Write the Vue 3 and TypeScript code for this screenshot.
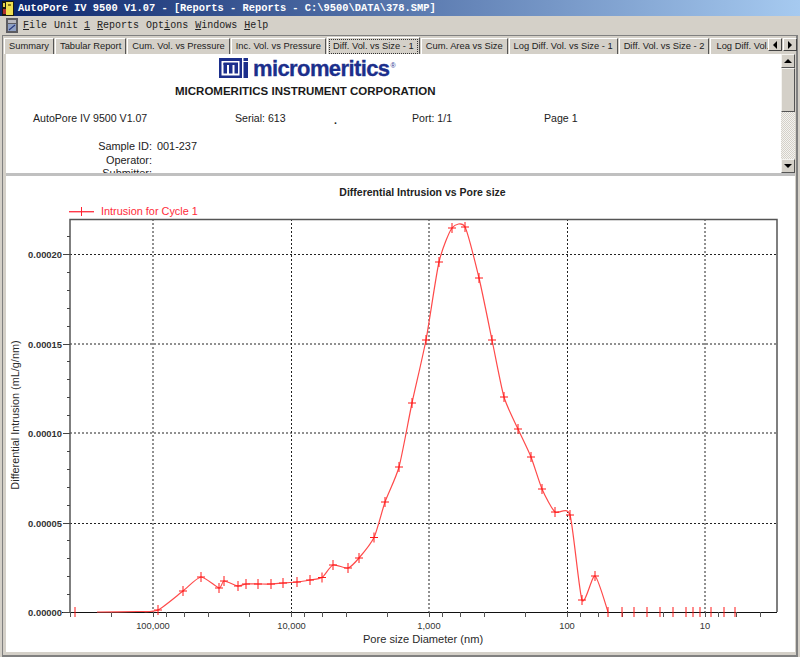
<template>
  <div class="window">
    <div class="titlebar">
      <svg class="app-icon" width="12" height="15" viewBox="0 0 12 15">
        <rect width="12" height="15" fill="#1c1c10" />
        <rect x="4" y="1" width="7" height="13" fill="#f0e050" />
        <rect x="1" y="2" width="2" height="4" fill="#e8d44a" />
        <rect x="1" y="8" width="3" height="5" fill="#b03030" />
        <rect x="6" y="3" width="3" height="2" fill="#8a7a20" />
      </svg>
      <span class="title-text">AutoPore IV 9500 V1.07 - [Reports - Reports - C:\9500\DATA\378.SMP]</span>
    </div>

    <div class="menubar">
      <svg class="doc-icon" width="12" height="15" viewBox="0 0 12 15">
        <rect width="12" height="15" fill="#5c5c62" />
        <rect x="2" y="2" width="8" height="3" fill="#b8b8c0" />
        <rect x="2" y="6" width="8" height="7" fill="#8fa0c4" />
        <path d="M3 12 L9 7" stroke="#2a3a80" stroke-width="1.2" />
      </svg>
      <span class="menu-item"><u>F</u>ile</span>
      <span class="menu-item">Unit <u>1</u></span>
      <span class="menu-item"><u>R</u>eports</span>
      <span class="menu-item">Opt<u>i</u>ons</span>
      <span class="menu-item"><u>W</u>indows</span>
      <span class="menu-item"><u>H</u>elp</span>
    </div>

    <div class="body">
      <div class="tabs">
        <div
          v-for="tab in tabs"
          :key="tab"
          class="tab"
          :class="{ active: tab === activeTab }"
        >
          <span class="tab-label">{{ tab }}</span>
        </div>
        <div class="tab clipped"><span class="tab-label">Log Diff. Vol. vs Size - 2</span></div>
        <div class="tab-arrows">
          <button class="arrow"><span class="tri-left"></span></button>
          <button class="arrow"><span class="tri-right"></span></button>
        </div>
      </div>

      <div class="report">
        <div class="report-page">
          <div class="logo">
            <svg width="29" height="20" viewBox="0 0 29 20">
              <path
                fill="#1c2f8c"
                fill-rule="evenodd"
                d="M0 0H23V20H0Z M2.5 3V17.5H20.5V3Z"
              />
              <rect x="24.5" y="0" width="4.5" height="3" fill="#1c2f8c" />
              <rect x="24.5" y="4" width="4.5" height="16" fill="#1c2f8c" />
              <rect x="4.5" y="5" width="3.5" height="10.5" fill="#1c2f8c" />
              <rect x="10" y="5" width="3.5" height="10.5" fill="#1c2f8c" />
              <rect x="15.5" y="5" width="3.5" height="10.5" fill="#1c2f8c" />
              <rect x="4.5" y="4.5" width="14.5" height="2.5" fill="#1c2f8c" />
            </svg>
            <span class="logo-word">micromeritics</span><span class="logo-reg">®</span>
          </div>
          <div class="company">MICROMERITICS INSTRUMENT CORPORATION</div>
          <div class="info-row">
            <span class="c-version">AutoPore IV 9500 V1.07</span>
            <span class="c-serial">Serial: 613</span>
            <span class="c-dot">.</span>
            <span class="c-port">Port: 1/1</span>
            <span>Page 1</span>
          </div>
          <div class="meta">
            <span class="meta-key">Sample ID:</span><span>001-237</span>
            <span class="meta-key">Operator:</span><span></span>
            <span class="meta-key">Submitter:</span><span></span>
          </div>
        </div>
        <div class="scrollbar">
          <button class="sb-btn"><span class="tri-up"></span></button>
          <div class="sb-thumb"></div>
          <div class="sb-track"></div>
          <button class="sb-btn"><span class="tri-down"></span></button>
        </div>
      </div>

      <div class="divider"></div>

      <svg class="chart" width="789" height="476" viewBox="6 176 789 476">
        <text x="422.5" y="196" class="t-title" text-anchor="middle">Differential Intrusion vs Pore size</text>

        <rect x="69" y="211" width="25" height="1.4" fill="#ff3a4a" />
        <rect x="81" y="207" width="1" height="9" fill="#ff2030" />
        <text x="101" y="215" class="t-legend">Intrusion for Cycle 1</text>

        <line
          v-for="x in gridX"
          :key="'gx' + x"
          :x1="x" y1="219" :x2="x" y2="612"
          class="grid"
        />
        <line
          v-for="y in gridY"
          :key="'gy' + y"
          x1="70" :y1="y" x2="777" :y2="y"
          class="grid"
        />

        <path d="M70 612V219.5H777V612" fill="none" stroke="#555" stroke-width="1.5" />
        <line x1="62" y1="612.5" x2="777" y2="612.5" stroke="#111" />

        <line
          v-for="t in yTicks"
          :key="'yt' + t.y"
          :x1="t.major ? 63 : 67" :y1="t.y" x2="70" :y2="t.y"
          stroke="#444"
        />
        <line
          v-for="x in xTicks"
          :key="'xt' + x"
          :x1="x" y1="612" :x2="x" y2="617"
          stroke="#555"
        />

        <text
          v-for="l in yLabels"
          :key="l.text"
          x="62" :y="l.y"
          class="t-ylabel"
          text-anchor="end"
        >{{ l.text }}</text>
        <text
          v-for="l in xLabels"
          :key="l.text"
          :x="l.x" y="629"
          class="t-xlabel"
          text-anchor="middle"
        >{{ l.text }}</text>

        <text x="423" y="643" class="t-axis" text-anchor="middle">Pore size Diameter (nm)</text>
        <text
          class="t-axis t-axis-y"
          text-anchor="middle"
          transform="translate(19 415) rotate(-90)"
        >Differential Intrusion (mL/g/nm)</text>

        <path :d="curvePath" fill="none" stroke="#ff4a4a" stroke-width="1.2" stroke-linejoin="round" />
        <g stroke="#ff1818">
          <template v-for="p in markers" :key="p[0]">
            <line :x1="p[0] - 4" :y1="p[1]" :x2="p[0] + 4" :y2="p[1]" />
            <line :x1="p[0]" :y1="p[1] - 5" :x2="p[0]" :y2="p[1] + 5" />
          </template>
        </g>
        <line
          v-for="x in zeroMarks"
          :key="'z' + x"
          :x1="x" y1="607" :x2="x" y2="617"
          stroke="#ff1818"
        />
      </svg>
    </div>
  </div>
</template>

<script setup lang="ts">
const tabs: string[] = [
  'Summary',
  'Tabular Report',
  'Cum. Vol. vs Pressure',
  'Inc. Vol. vs Pressure',
  'Diff. Vol. vs Size - 1',
  'Cum. Area vs Size',
  'Log Diff. Vol. vs Size - 1',
  'Diff. Vol. vs Size - 2',
]
const activeTab = 'Diff. Vol. vs Size - 1'

const gridX = [153, 291.5, 429, 567.5, 705]
const gridY = [254.5, 344, 433, 523.5]

const yTicks = Array.from({ length: 22 }, (_, i) => ({
  y: Math.round(612 - i * 17.9) + 0.5,
  major: i % 5 === 0,
}))

// log axis, decades run backwards from 1,000,000 on the left
const xPos = (v: number) => Math.round(153 + 138 * (5 - Math.log10(v))) + 0.5
const xTicks: number[] = []
for (const d of [100000, 10000, 1000, 100, 10, 1]) {
  for (const m of [4, 2, 1, 0.8, 0.6, 0.4, 0.2]) {
    const x = xPos(d * m)
    if (x >= 70 && x <= 777 && !xTicks.includes(x)) xTicks.push(x)
  }
}

const yLabels = [
  { text: '0.00020', y: 258 },
  { text: '0.00015', y: 348 },
  { text: '0.00010', y: 437 },
  { text: '0.00005', y: 527 },
  { text: '0.00000', y: 616 },
]
const xLabels = [
  { text: '100,000', x: 153 },
  { text: '10,000', x: 291.5 },
  { text: '1,000', x: 429 },
  { text: '100', x: 567 },
  { text: '10', x: 705 },
]

const markers: [number, number][] = [
  [158, 610], [183, 591], [201, 577], [219, 588], [224, 581], [238, 586],
  [246, 584], [258, 584], [271, 584], [283, 583], [297, 582], [310, 580],
  [322, 577.5], [333, 565], [348, 568], [359, 558], [374, 537.5], [385, 502],
  [399, 467], [412, 403], [426, 340], [439, 262], [452, 228], [465, 227],
  [479, 278], [492, 340], [504, 397], [518, 429], [531, 457], [542, 489],
  [555, 512], [570, 515], [582, 600], [595, 576],
]
const zeroMarks = [75, 608, 622, 634, 647, 660, 673, 686, 693, 700, 711, 724, 735]

const pts: [number, number][] = [[97, 612], [138, 611.5], ...markers, [608, 612]]

// light catmull-rom, the plot draws a spline through the points
const k = 0.11
let curvePath = `M${pts[0][0]} ${pts[0][1]}`
for (let i = 0; i < pts.length - 1; i++) {
  const p0 = pts[Math.max(i - 1, 0)]
  const p1 = pts[i]
  const p2 = pts[i + 1]
  const p3 = pts[Math.min(i + 2, pts.length - 1)]
  const c1x = (p1[0] + (p2[0] - p0[0]) * k).toFixed(1)
  const c1y = (p1[1] + (p2[1] - p0[1]) * k).toFixed(1)
  const c2x = (p2[0] - (p3[0] - p1[0]) * k).toFixed(1)
  const c2y = (p2[1] - (p3[1] - p1[1]) * k).toFixed(1)
  curvePath += ` C${c1x} ${c1y} ${c2x} ${c2y} ${p2[0]} ${p2[1]}`
}
</script>

<style>
html,
body {
  background: #fff;
}
</style>

<style scoped>
.window {
  width: 800px;
  height: 657px;
  background: #d4d0c8;
  display: flex;
  flex-direction: column;
  overflow: hidden;
}

.titlebar {
  height: 16px;
  flex: none;
  display: flex;
  align-items: center;
  gap: 4px;
  padding-left: 2px;
  background: linear-gradient(90deg, #0a246a 0%, #a6caf0 100%);
}
.title-text {
  font-family: "Liberation Mono", monospace;
  font-weight: 700;
  font-size: 10.4px;
  color: #fff;
  white-space: pre;
}

.menubar {
  height: 19px;
  flex: none;
  display: flex;
  align-items: center;
  padding-left: 6px;
  font-family: "Liberation Mono", monospace;
  font-size: 10px;
  color: #222;
}
.doc-icon {
  margin-right: 5px;
}
.menu-item {
  margin-right: 7px;
  white-space: pre;
}

.body {
  flex: 1;
  min-height: 0;
  display: flex;
  flex-direction: column;
  margin: 0 2px 0 2px;
  padding: 1px 1px 3px 3px;
  border-top: 1px solid #808080;
  border-left: 1px solid #808080;
  border-right: 2px solid #808080;
  border-bottom: 2px solid #808080;
  box-sizing: border-box;
}

.tabs {
  height: 17px;
  flex: none;
  display: flex;
  margin: 0 -2px 0 -2px;
  font-family: "Liberation Sans", Arial, sans-serif;
  font-size: 9.35px;
  color: #222;
}
.tab {
  flex: none;
  margin-top: 1px;
  padding: 0 4px;
  height: 16px;
  line-height: 15px;
  border-left: 1px solid #fff;
  border-top: 1px solid #fff;
  border-right: 1px solid #555;
  margin-right: 1px;
  box-sizing: border-box;
  white-space: nowrap;
}
.tab.active {
  margin-top: 0;
  height: 17px;
  line-height: 16px;
  padding: 1px;
  background: #d4d0c8;
}
.tab.active .tab-label {
  display: block;
  padding: 0 3px;
  border: 1px dotted #333;
  height: 13px;
  line-height: 12px;
}
.tab.clipped {
  flex: 1;
  min-width: 0;
  padding-left: 5px;
  overflow: hidden;
  border-right: 0;
  margin-right: 0;
}
.tab-arrows {
  flex: none;
  display: flex;
  gap: 1px;
  margin-top: 1px;
}
.arrow {
  width: 14px;
  height: 13px;
  padding: 0;
  background: #d4d0c8;
  border: 1px solid;
  border-color: #fff #444 #444 #fff;
  display: flex;
  align-items: center;
  justify-content: center;
}
.tri-left,
.tri-right,
.tri-up,
.tri-down {
  display: block;
  width: 0;
  height: 0;
}
.tri-left {
  border: 4px solid transparent;
  border-left: 0;
  border-right-color: #000;
}
.tri-right {
  border: 4px solid transparent;
  border-right: 0;
  border-left-color: #000;
}
.tri-up {
  border: 4px solid transparent;
  border-top: 0;
  border-bottom-color: #000;
}
.tri-down {
  border: 4px solid transparent;
  border-bottom: 0;
  border-top-color: #000;
}

.report {
  height: 119px;
  flex: none;
  display: flex;
  background: #fff;
  overflow: hidden;
  font-family: "Liberation Sans", Arial, sans-serif;
  color: #222;
}
.report-page {
  flex: 1;
  min-width: 0;
  overflow: hidden;
}
.logo {
  height: 26px;
  padding: 4px 0 0 213px;
  display: flex;
  align-items: flex-start;
}
.logo-word {
  margin: -2px 0 0 5px;
  font-weight: 700;
  font-size: 22px;
  line-height: 26px;
  letter-spacing: -0.6px;
  color: #1c2f8c;
  -webkit-text-stroke: 0.3px #1c2f8c;
}
.logo-reg {
  margin: 3px 0 0 1px;
  font-size: 7px;
  line-height: 10px;
  color: #1c2f8c;
}
.company {
  padding-left: 169px;
  font-weight: 700;
  font-size: 11.5px;
  line-height: 14px;
  color: #1a1a1a;
}
.info-row {
  display: flex;
  margin-top: 13px;
  padding-left: 27px;
  font-size: 10.6px;
  line-height: 14px;
}
.c-version {
  width: 202px;
}
.c-serial {
  width: 99px;
}
.c-dot {
  width: 78px;
  font-weight: 700;
  transform: translateY(2px);
}
.c-port {
  width: 132px;
}
.meta {
  display: grid;
  grid-template-columns: 118px auto;
  justify-content: start;
  column-gap: 5px;
  margin-top: 15px;
  padding-left: 28px;
  font-size: 10.9px;
  line-height: 13.5px;
}
.meta-key {
  text-align: right;
}

.scrollbar {
  width: 14px;
  flex: none;
  display: flex;
  flex-direction: column;
  background: repeating-conic-gradient(#d4d0c8 0 25%, #f4f3f0 0 50%) 0 0 / 2px 2px;
}
.sb-btn {
  width: 14px;
  height: 14px;
  flex: none;
  padding: 0;
  background: #d4d0c8;
  border: 1px solid;
  border-color: #f4f3f0 #555 #555 #f4f3f0;
  display: flex;
  align-items: center;
  justify-content: center;
}
.sb-thumb {
  height: 44px;
  flex: none;
  background: #d4d0c8;
  border: 1px solid;
  border-color: #f4f3f0 #555 #555 #f4f3f0;
  box-sizing: border-box;
}
.sb-track {
  flex: 1;
}

.divider {
  height: 3px;
  flex: none;
  background: #c0c0c0;
}

.chart {
  display: block;
  flex: none;
  background: #fff;
  font-family: "Liberation Sans", Arial, sans-serif;
}
.grid {
  stroke: #222;
  stroke-dasharray: 2 2;
}
.t-title {
  font-size: 10.5px;
  font-weight: 700;
  fill: #222;
}
.t-legend {
  font-size: 10.9px;
  fill: #ff2b3a;
}
.t-ylabel {
  font-size: 9.4px;
  font-weight: 700;
  fill: #333;
}
.t-xlabel {
  font-size: 9.3px;
  fill: #333;
}
.t-axis {
  font-size: 11.1px;
  fill: #2a2a2a;
}
.t-axis-y {
  font-size: 10.9px;
}
</style>
